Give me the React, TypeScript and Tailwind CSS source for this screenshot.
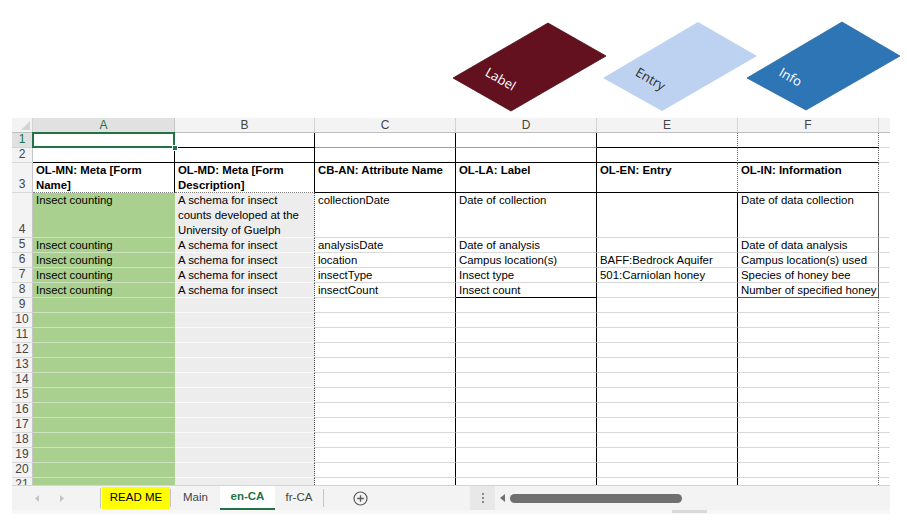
import React from "react";

const data: Record<number, string[]> = {
  3: ["OL-MN: Meta [Form Name]", "OL-MD: Meta [Form Description]", "CB-AN: Attribute Name", "OL-LA: Label", "OL-EN: Entry", "OL-IN: Information"],
  4: ["Insect counting", "A schema for insect counts developed at the University of Guelph", "collectionDate", "Date of collection", "", "Date of data collection"],
  5: ["Insect counting", "A schema for insect", "analysisDate", "Date of analysis", "", "Date of data analysis"],
  6: ["Insect counting", "A schema for insect", "location", "Campus location(s)", "BAFF:Bedrock Aquifer", "Campus location(s) used"],
  7: ["Insect counting", "A schema for insect", "insectType", "Insect type", "501:Carniolan honey", "Species of honey bee"],
  8: ["Insect counting", "A schema for insect", "insectCount", "Insect count", "", "Number of specified honey"],
};

function bgClass(r: number, c: number) {
  if (r >= 4 && c === 0) return "bg-[#a9d08e]";
  if (r >= 4 && c === 1) return "bg-[#ededed]";
  return "bg-white";
}

function rightClass(r: number, c: number) {
  switch (c) {
    case 0:
      return r <= 3 ? "border-r-black" : "border-r-[#a9d08e]";
    case 1:
      return r <= 3 ? "border-r-black" : "border-r-[#4d4d4d] [border-right-style:dotted]";
    case 2:
    case 3:
      return "border-r-black";
    case 4:
      return r <= 3 ? "border-r-[#6d6d6d] [border-right-style:dotted]" : "border-r-black";
    case 5:
      if (r <= 3) return "border-r-[#6d6d6d] [border-right-style:dotted]";
      if (r <= 8) return "border-r-[#595959]";
      return "border-r-[#7f7f7f] [border-right-style:dotted]";
    default:
      return "border-r-transparent";
  }
}

function bottomClass(r: number, c: number) {
  if (c === 6) return "border-b-[#d9d9d9]";
  if (r === 1) {
    if (c === 0) return "border-b-[#d9d9d9]";
    if (c === 2 || c === 3) return "border-b-[#9a9a9a]";
    return "border-b-black";
  }
  if (r === 2) return "border-b-black";
  if (r === 3) return c <= 1 ? "border-b-[#7a7a7a] [border-bottom-style:dotted]" : "border-b-black";
  if (r === 8 && c === 3) return "border-b-black";
  if (r === 8 && c === 5) return "border-b-[#595959]";
  if (c === 0) return "border-b-[#cfe2c0]";
  if (c === 1) return "border-b-[#fafafa]";
  return "border-b-[#d9d9d9]";
}

function Cell({ r, c }: { r: number; c: number }) {
  const text = data[r]?.[c] ?? "";
  const wrap = r === 3 || r === 4;
  const bold = r === 3;
  const cls = [
    "border-r border-b overflow-hidden px-[3px] leading-[15px] text-black",
    bgClass(r, c),
    rightClass(r, c),
    bottomClass(r, c),
    wrap ? "whitespace-normal" : "whitespace-nowrap",
    bold ? "font-bold" : "",
    r === 1 && c === 0 ? "relative overflow-visible" : "",
  ].join(" ");
  return (
    <div className={cls}>
      {text}
      {r === 1 && c === 0 && (
        <>
          <div className="absolute left-[-1px] top-[-1px] w-[143px] h-[16px] border-2 border-[#217346]" />
          <div className="absolute right-[-4px] bottom-[-4px] w-[6px] h-[6px] bg-[#217346] border border-white" />
        </>
      )}
    </div>
  );
}

export default function App() {
  const rows = Array.from({ length: 21 }, (_, i) => i + 1);
  const letters = ["A", "B", "C", "D", "E", "F"];
  return (
    <div className="w-[907px] h-[520px] bg-white overflow-hidden font-['Liberation_Sans',Arial,sans-serif]">
      <svg width="907" height="118" className="block">
        <polygon points="453,78 548,23 606,56 511,111" fill="#64111f" stroke="#4e0d18" strokeWidth="0.8" />
        <text x="500" y="80" transform="rotate(30 500 80)" fill="#ffffff" fontSize="13" fontFamily="Open Sans, sans-serif" textAnchor="middle" dominantBaseline="middle">Label</text>
        <polygon points="603,78 698,22 757,56 662,111" fill="#bdd2f0" />
        <text x="650" y="80" transform="rotate(30 650 80)" fill="#2b2b2b" fontSize="13" fontFamily="Open Sans, sans-serif" textAnchor="middle" dominantBaseline="middle">Entry</text>
        <polygon points="747,78 842,22 900,56 806,110" fill="#2e75b6" stroke="#2a69a3" strokeWidth="0.8" />
        <text x="790" y="78" transform="rotate(30 790 78)" fill="#ffffff" fontSize="13" fontFamily="Open Sans, sans-serif" textAnchor="middle" dominantBaseline="middle">Info</text>
      </svg>

      <div className="ml-[12px] w-[878px] h-[367px] overflow-hidden grid grid-cols-[21px_142px_140px_141px_141px_141px_141px_11px] grid-rows-[15px_15px_15px_30px_45px_repeat(17,15px)] text-[11.4px]">
        {/* header row */}
        <div className="bg-[#f3f3f3] border-r border-b border-r-[#d4d4d4] border-b-[#bfbfbf] flex items-end justify-end pr-[2px] pb-[2px]">
          <svg width="9" height="9"><polygon points="9,0 9,9 0,9" fill="#d4d4d4" /></svg>
        </div>
        {letters.map((l, i) => (
          <div
            key={l}
            className={
              i === 0
                ? "bg-[#e1e1e1] text-[#217346] border-r border-b border-r-[#c6c6c6] border-b-[#bfbfbf] flex items-center justify-center text-[12px] leading-[15px]"
                : "bg-[#f3f3f3] text-[#444444] border-r border-b border-r-[#d4d4d4] border-b-[#bfbfbf] flex items-center justify-center text-[12px] leading-[15px]"
            }
          >
            {l}
          </div>
        ))}
        <div className="bg-[#f3f3f3] border-b border-b-[#bfbfbf]" />

        {rows.map((r) => (
          <React.Fragment key={r}>
            <div
              className={
                r === 1
                  ? "bg-[#e1e1e1] text-[#217346] border-r border-b border-r-[#c6c6c6] border-b-[#d4d4d4] flex items-end justify-center text-[12px] leading-[15px]"
                  : "bg-[#f3f3f3] text-[#444444] border-r border-b border-r-[#c6c6c6] border-b-[#d9d9d9] flex items-end justify-center text-[12px] leading-[15px]"
              }
            >
              {r}
            </div>
            {[0, 1, 2, 3, 4, 5, 6].map((c) => (
              <Cell key={c} r={r} c={c} />
            ))}
          </React.Fragment>
        ))}
      </div>

      {/* sheet tabs bar */}
      <div className="ml-[12px] w-[878px] h-[25px] bg-[#f3f3f3] border-t border-t-[#d4d4d4] flex items-stretch text-[11.5px] leading-none">
        <div className="w-[88px] flex items-center">
          <svg className="ml-[23px]" width="5" height="7"><polygon points="4,0 4,7 0,3.5" fill="#c4c4c4" /></svg>
          <svg className="ml-[20px]" width="5" height="7"><polygon points="0,0 0,7 4,3.5" fill="#c4c4c4" /></svg>
        </div>
        <div className="w-px my-[2px] bg-[#c4c4c4]" />
        <div className="ml-px w-[68px] my-[1px] bg-[#ffff00] flex items-center justify-center text-black">READ ME</div>
        <div className="w-px my-[3px] bg-[#c4c4c4]" />
        <div className="w-[49px] flex items-center justify-center text-[#444444]">Main</div>
        <div className="w-[55px] bg-white border-b-2 border-b-[#217346] flex items-center justify-center font-bold text-[#217346]">en-CA</div>
        <div className="w-[48px] flex items-center justify-center text-[#444444]">fr-CA</div>
        <div className="w-px my-[3px] bg-[#c4c4c4]" />
        <div className="ml-[29px] w-[15px] flex items-center">
          <svg width="15" height="15" viewBox="0 0 15 15">
            <circle cx="7.5" cy="7.5" r="6.5" fill="none" stroke="#5a5a5a" strokeWidth="1.2" />
            <path d="M7.5 4.2v6.6M4.2 7.5h6.6" stroke="#5a5a5a" strokeWidth="1.3" />
          </svg>
        </div>
        <div className="w-[102px]" />
        <div className="w-[25px] bg-[#e8e8e8] flex flex-col items-center justify-center gap-[2px]">
          <div className="w-[2px] h-[2px] bg-[#8a8a8a]" />
          <div className="w-[2px] h-[2px] bg-[#8a8a8a]" />
          <div className="w-[2px] h-[2px] bg-[#8a8a8a]" />
        </div>
        <div className="ml-[5px] w-[5px] flex items-center">
          <svg width="5" height="8"><polygon points="5,0 5,8 0,4" fill="#6f6f6f" /></svg>
        </div>
        <div className="ml-[5px] w-[172px] h-[9px] self-center rounded-full bg-[#6f6f6f]" />
      </div>
      <div className="ml-[12px] w-[878px] h-[4px] bg-[#f7f7f7]">
        <div className="ml-[660px] w-[35px] h-[3px] bg-[#dadada]" />
      </div>
    </div>
  );
}
